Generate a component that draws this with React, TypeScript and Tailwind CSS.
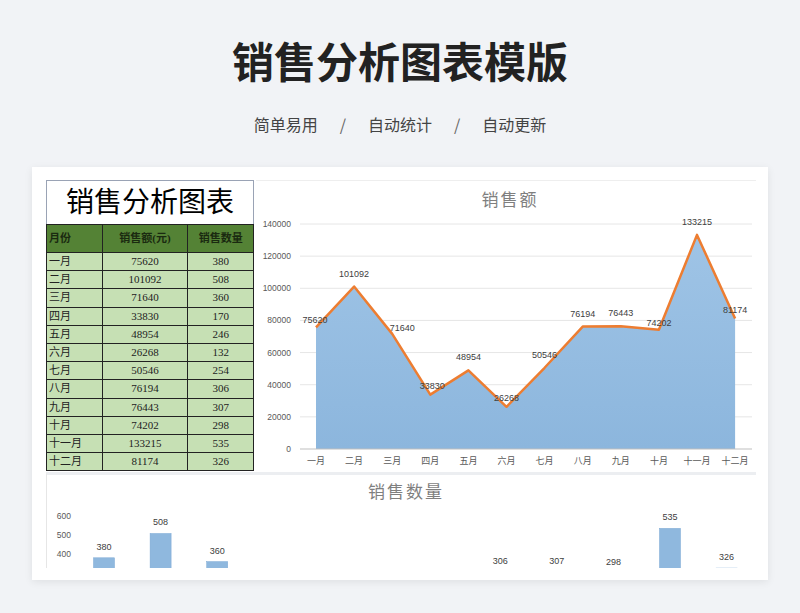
import React from "react";

const months = ["一月","二月","三月","四月","五月","六月","七月","八月","九月","十月","十一月","十二月"];
const sales = [75620,101092,71640,33830,48954,26268,50546,76194,76443,74202,133215,81174];
const qty = [380,508,360,170,246,132,254,306,307,298,535,326];

function AreaChart() {
  const x = (i: number) => 60 + i * 38.1;
  const y = (v: number) => 268 - (v * 225) / 140000;
  const line = sales.map((v, i) => `${i ? "L" : "M"}${x(i)},${y(v)}`).join(" ");
  const area = `${line} L${x(11)},268 L${x(0)},268 Z`;
  const labelOff = [[-1,-4],[0,-10],[10,-3],[2,-6],[0,-10],[0,-6],[0,-10],[0,-10],[0,-10],[0,-4],[0,-10],[0,-6]];
  return (
    <svg width="500" height="290" className="block">
      <defs>
        <linearGradient id="ag" x1="0" y1="0" x2="0" y2="1">
          <stop offset="0" stopColor="#9fc4e6" />
          <stop offset="1" stopColor="#8cb6dd" />
        </linearGradient>
      </defs>
      <text x="254" y="25" textAnchor="middle" fontSize="17" fill="#7f7f7f" fontFamily="'Liberation Serif','Noto Sans CJK SC',serif" letterSpacing="2">销售额</text>
      {[0,20000,40000,60000,80000,100000,120000,140000].map((v) => (
        <g key={v}>
          {v > 0 && <line x1="44" x2="496" y1={y(v)} y2={y(v)} stroke="#e6e6e6" />}
          <text x="35" y={y(v) + 3} textAnchor="end" fontSize="8.5" fill="#595959" fontFamily="'Liberation Sans',sans-serif">{v}</text>
        </g>
      ))}
      <path d={area} fill="url(#ag)" />
      <line x1="44" x2="496" y1="268" y2="268" stroke="#bfbfbf" />
      <path d={line} fill="none" stroke="#ed7d31" strokeWidth="2.5" strokeLinejoin="round" />
      {sales.map((v, i) => (
        <text key={i} x={x(i) + labelOff[i][0]} y={y(v) + labelOff[i][1]} textAnchor="middle" fontSize="9" fill="#404040" fontFamily="'Liberation Sans',sans-serif">{v}</text>
      ))}
      {months.map((m, i) => (
        <text key={m} x={x(i)} y="283" textAnchor="middle" fontSize="9" fill="#595959" fontFamily="'Liberation Serif','Noto Sans CJK SC',serif">{m}</text>
      ))}
    </svg>
  );
}

function BarChart() {
  const x = (i: number) => 57 + i * 56.6;
  const y = (v: number) => 79 - (v - 400) * 0.19;
  return (
    <svg width="710" height="96" className="block">
      <text x="359" y="23" textAnchor="middle" fontSize="17" fill="#7f7f7f" fontFamily="'Liberation Serif','Noto Sans CJK SC',serif" letterSpacing="2">销售数量</text>
      {[400,500,600].map((v) => (
        <text key={v} x="24" y={y(v) + 3} textAnchor="end" fontSize="8.5" fill="#595959" fontFamily="'Liberation Sans',sans-serif">{v}</text>
      ))}
      {qty.map((v, i) => (
        <g key={i}>
          <rect x={x(i) - 10.5} y={y(v)} width="21" height="120" fill="#8fb8de" stroke="#7aa7d4" strokeWidth="0.5" />
          <text x={x(i)} y={y(v) - 8} textAnchor="middle" fontSize="9" fill="#404040" fontFamily="'Liberation Sans',sans-serif">{v}</text>
        </g>
      ))}
    </svg>
  );
}

export default function App() {
  const serif = { fontFamily: "'Liberation Serif','Noto Sans CJK SC',serif" };
  return (
    <div className="w-[800px] h-[613px] bg-[#f1f3f6] overflow-hidden" style={{ fontFamily: "'Noto Sans CJK SC',sans-serif" }}>
      <div className="pt-[30px] text-center text-[42px] leading-[60px] font-bold text-[#222]">销售分析图表模版</div>
      <div className="mt-[22px] flex justify-center gap-[22px] text-[16px] leading-[24px] text-[#444]">
        <span>简单易用</span><span className="text-[#666]">/</span><span>自动统计</span><span className="text-[#666]">/</span><span>自动更新</span>
      </div>
      <div className="mt-[31px] ml-[32px] w-[736px] h-[413px] bg-white shadow-[0_2px_8px_rgba(0,0,0,0.08)] overflow-hidden">
        <div className="flex pt-[13px] pl-[14px] h-[303px]">
          <div className="w-[208px]" style={serif}>
            <div className="h-[44px] border border-[#9aa3b5] border-b-0 flex items-center justify-center text-[28px] text-black">销售分析图表</div>
            <table className="w-[208px] border-collapse text-[11px] leading-none">
              <colgroup><col className="w-[56px]" /><col className="w-[86px]" /><col className="w-[66px]" /></colgroup>
              <thead>
                <tr className="h-[28px] bg-[#548235] text-[#1a2a10] font-bold">
                  <td className="border border-[#222] pl-[2px]">月份</td>
                  <td className="border border-[#222] text-center">销售额(元)</td>
                  <td className="border border-[#222] text-center">销售数量</td>
                </tr>
              </thead>
              <tbody>
                {months.map((m, i) => (
                  <tr key={m} className="h-[18.2px] bg-[#c6e0b4] text-[#222]">
                    <td className="border border-[#222] pl-[2px]">{m}</td>
                    <td className="border border-[#222] text-center">{sales[i]}</td>
                    <td className="border border-[#222] text-center">{qty[i]}</td>
                  </tr>
                ))}
              </tbody>
            </table>
          </div>
          <div className="ml-[2px] border-t border-[#eee]">
            <AreaChart />
          </div>
        </div>
        <div className="ml-[14px] mt-[2px] w-[710px] h-[96px] overflow-hidden border-t-[3px] border-[#eceef1] border-l border-l-[#e6e6e6]">
          <BarChart />
        </div>
      </div>
    </div>
  );
}
